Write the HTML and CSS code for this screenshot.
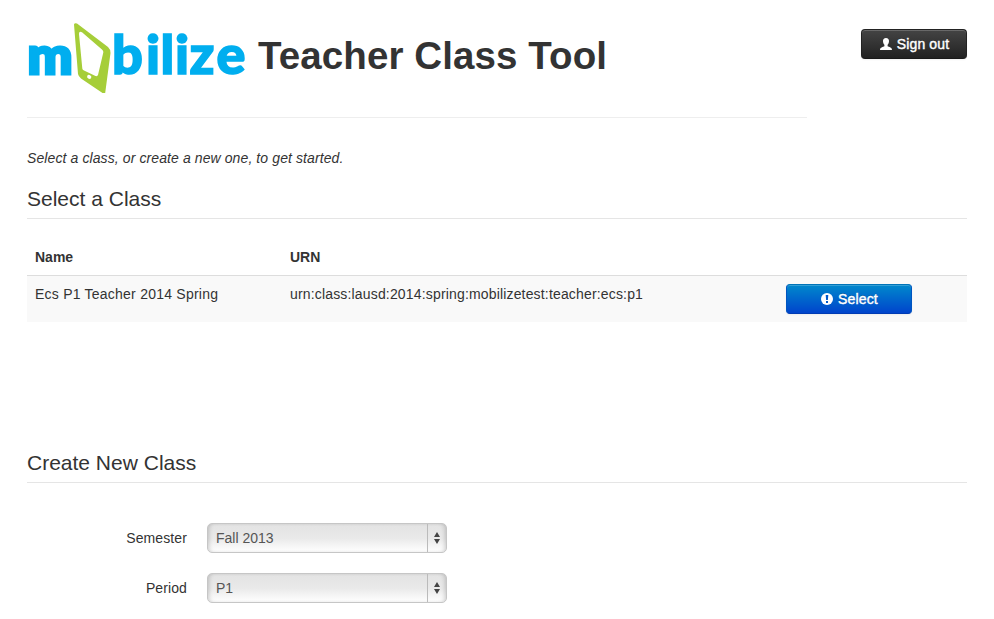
FILE: index.html
```html
<!DOCTYPE html>
<html lang="en">
<head>
<meta charset="utf-8">
<title>Teacher Class Tool</title>
<link rel="stylesheet" href="styles.css">
</head>
<body>
<header class="header">
  <div class="brand">
    <svg class="logo" viewBox="0 0 226 80" role="img" aria-label="mobilize">
      <g class="wordmark">
        <text class="heavy" x="0.500" y="54.500" textLength="45" lengthAdjust="spacingAndGlyphs">m</text>
        <text x="85 119 133.500 148 162.500 189.500" y="55.300">bilize</text>
      </g>
      <path class="phone" fill-rule="evenodd" d="M47 5.500Q47.500 3.500 50 4.500L81 28Q83.700 30.500 83.500 34L78.200 74H75.500L54 59.500Q51.500 57.500 51 55ZM52 15L55.300 49.500Q55.500 50.800 57 51.500L68.500 57Q70.500 57.500 71 56L76.300 33.500Q76.500 32 75.500 31L55 13.300Q52 11.500 52 15Z"/>
      <ellipse cx="62.200" cy="57.800" rx="2.200" ry="1.900" transform="rotate(30 62.200 57.800)" fill="#fff"/>
    </svg>
    <h1><span>Teacher Class Tool</span></h1>
  </div>
  <button class="btn btn-inverse" type="button"><svg width="12" height="12" viewBox="0 0 12 12"><path fill="#fff" d="M6 0C8 0 9.200 1.300 9 3.200C8.900 5 8.200 6 7.600 6.800V8.300C9 9.200 12 9.300 12 12H0C0 9.300 3 9.200 4.400 8.300V6.800C3.800 6 3.100 5 3 3.200C2.800 1.300 4 0 6 0Z"/></svg><span class="btn-label">Sign out</span></button>
</header>
<main>
  <p class="intro"><em>Select a class, or create a new one, to get started.</em></p>
  <section class="classes">
    <h2><span>Select a Class</span></h2>
    <table>
      <thead><tr><th class="col-name">Name</th><th class="col-urn">URN</th><th></th></tr></thead>
      <tbody><tr><td><span class="class-name">Ecs P1 Teacher 2014 Spring</span></td><td><span class="urn">urn:class:lausd:2014:spring:mobilizetest:teacher:ecs:p1</span></td>
      <td><button class="btn btn-primary" type="button"><svg width="12" height="12" viewBox="0 0 12 12"><circle cx="6" cy="6" r="6" fill="#fff"/><path fill="#0059cc" d="M4.700 2H7.300L6.900 7H5.100ZM5 8H7V10H5Z"/></svg><span class="btn-label">Select</span></button></td></tr></tbody>
    </table>
  </section>
  <section>
    <h2><span>Create New Class</span></h2>
    <form>
      <div class="row"><label>Semester</label><div class="select"><span>Fall 2013</span><i><svg width="6" height="12" viewBox="0 0 6 12"><path fill="#444" d="M3 0L6 5H0ZM0 7H6L3 12Z"/></svg></i></div></div>
      <div class="row"><label>Period</label><div class="select"><span>P1</span><i><svg width="6" height="12" viewBox="0 0 6 12"><path fill="#444" d="M3 0L6 5H0ZM0 7H6L3 12Z"/></svg></i></div></div>
    </form>
  </section>
</main>
</body>
</html>
```
FILE: styles.css
```css
* { box-sizing: border-box; }
body {
  margin: 0;
  padding: 19px 27px 0;
  width: 994px;
  height: 619px;
  overflow: hidden;
  background: #fff;
  color: #333;
  font: 14px/20px "Liberation Sans", Arial, sans-serif;
}
.header { display: flex; justify-content: space-between; align-items: flex-start; }
.brand { width: 780px; height: 99px; display: flex; border-bottom: 1px solid #eee; }
.logo { width: 226px; height: 80px; flex: none; }
.wordmark { font: 900 54px Lato, sans-serif; fill: #00aeef; stroke: #00aeef; stroke-width: 1.6px; }
.wordmark .heavy { font-size: 52px; stroke-width: 3.2px; }
.phone { fill: #a6ce39; }
h1 { margin: 17px 0 0 5px; font-size: 38.5px; line-height: 40px; letter-spacing: .1px; white-space: nowrap; }
.btn {
  display: flex;
  align-items: center;
  justify-content: center;
  gap: 5px;
  height: 30px;
  padding: 0;
  border: 1px solid;
  border-radius: 4px;
  color: #fff;
  font: 14px/20px "Liberation Sans", Arial, sans-serif;
  letter-spacing: .15px;
  -webkit-text-stroke: .4px #fff;
  text-shadow: 0 -1px 0 rgba(0, 0, 0, .25);
  box-shadow: inset 0 1px 0 rgba(255, 255, 255, .2), 0 1px 2px rgba(0, 0, 0, .05);
}
.btn-inverse { width: 106px; margin-top: 10px; padding-left: 1px; border-color: #222 #222 #1a1a1a; background: linear-gradient(#444, #222); }
.btn-primary { width: 126px; padding-left: 1px; border-color: #0074b8 #0055c0 #003bb3; background: linear-gradient(#08c, #04c); }
.intro { margin: 30px 0 0; letter-spacing: .1px; }
h2 { margin: 0; height: 41px; border-bottom: 1px solid #e5e5e5; font-size: 21px; font-weight: 400; line-height: 42px; }
.intro + .classes { margin-top: 10px; height: 264px; }
table { width: 940px; margin-top: 20px; border-collapse: collapse; table-layout: fixed; }
.col-name { width: 255px; }
.col-urn { width: 496px; }
th, td { padding: 8px; text-align: left; vertical-align: top; }
th { height: 36px; }
td { height: 46px; padding-bottom: 7px; border-top: 1px solid #ddd; background: #f9f9f9; }
.class-name { letter-spacing: .23px; }
.urn { letter-spacing: .165px; }
form { padding-top: 40px; }
.row { display: flex; align-items: center; gap: 20px; height: 30px; margin-bottom: 20px; }
.row label { width: 160px; text-align: right; letter-spacing: .1px; }
.select {
  display: flex;
  width: 240px;
  height: 30px;
  border: 1px solid #c6c6c6;
  border-radius: 5px;
  background: linear-gradient(#e3e3e3, #e9e9e9 50%, #fff);
  box-shadow: inset 3px 0 4px -2px rgba(0, 0, 0, .18), inset -3px 0 4px -2px rgba(0, 0, 0, .18);
  color: #555;
  line-height: 28px;
}
.select span { flex: 1; padding-left: 8px; }
.select i { display: flex; width: 19px; align-items: center; justify-content: center; border-left: 1px solid #bbb; }
```
